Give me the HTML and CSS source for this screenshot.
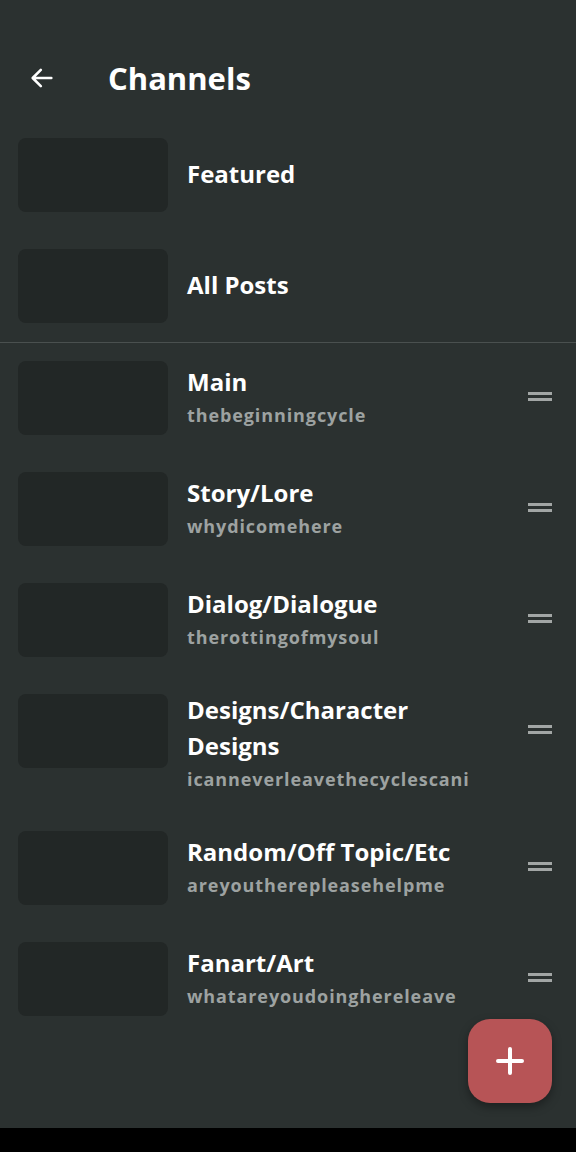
FILE: index.html
```html
<!DOCTYPE html>
<html lang="en">
<head>
    <meta charset="UTF-8">
    <meta name="viewport" content="width=device-width, initial-scale=1.0">
    <title>Channels</title>
    <link rel="stylesheet" href="styles.css">
</head>
<body>
    <div class="screen">
        <div class="header">
            <span class="back">
                <svg width="28" height="28" viewBox="0 0 24 24">
                    <path d="M20 12H4.5M11 5l-7 7 7 7" fill="none" stroke="#fff" stroke-width="2.2" stroke-linecap="round" stroke-linejoin="round"/>
                </svg>
            </span>
            <h1>Channels</h1>
        </div>

        <ul class="channels fixed">
            <li><div class="thumb"></div><div class="info"><span class="name">Featured</span></div></li>
            <li><div class="thumb"></div><div class="info"><span class="name">All Posts</span></div></li>
        </ul>

        <div class="divider"></div>

        <ul class="channels">
            <li>
                <div class="thumb"></div>
                <div class="info"><span class="name">Main</span><span class="sub">thebeginningcycle</span></div>
                <div class="handle"><i></i><i></i></div>
            </li>
            <li>
                <div class="thumb"></div>
                <div class="info"><span class="name">Story/Lore</span><span class="sub">whydicomehere</span></div>
                <div class="handle"><i></i><i></i></div>
            </li>
            <li>
                <div class="thumb"></div>
                <div class="info"><span class="name">Dialog/Dialogue</span><span class="sub">therottingofmysoul</span></div>
                <div class="handle"><i></i><i></i></div>
            </li>
            <li>
                <div class="thumb"></div>
                <div class="info"><span class="name">Designs/Character Designs</span><span class="sub">icanneverleavethecyclescani</span></div>
                <div class="handle"><i></i><i></i></div>
            </li>
            <li>
                <div class="thumb"></div>
                <div class="info"><span class="name">Random/Off Topic/Etc</span><span class="sub">areyoutherepleasehelpme</span></div>
                <div class="handle"><i></i><i></i></div>
            </li>
            <li>
                <div class="thumb"></div>
                <div class="info"><span class="name">Fanart/Art</span><span class="sub">whatareyoudoinghereleave</span></div>
                <div class="handle"><i></i><i></i></div>
            </li>
        </ul>

        <button class="fab">
            <svg width="30" height="30" viewBox="0 0 30 30">
                <path d="M15 3v24M3 15h24" stroke="#fff" stroke-width="4" stroke-linecap="round"/>
            </svg>
        </button>
    </div>
    <div class="navbar"></div>
</body>
</html>
```

FILE: styles.css
```css
body, html {
    margin: 0;
    padding: 0;
    height: 100%;
    overflow: hidden;
    font-family: "Open Sans", Lato, sans-serif;
}

body {
    background: #000;
    color: #fff;
}

.screen {
    position: relative;
    height: 1128px;
    background: #2b3130;
}

.header {
    display: flex;
    align-items: center;
    height: 83.5px;
    padding: 36px 0 0 28px;
}

    .header .back {
        display: flex;
        width: 80px;
    }

    .header h1 {
        margin: 0;
        font-size: 31px;
        font-weight: 700;
    }

ul {
    list-style-type: none;
    padding: 0;
    margin: 0;
}

.channels li {
    display: flex;
    align-items: flex-start;
    padding: 18.5px 24px 18.5px 18px;
}

.thumb {
    flex: none;
    width: 150px;
    height: 74px;
    border-radius: 8px;
    background: #222726;
}

.info {
    flex: 1;
    min-height: 74px;
    display: flex;
    flex-direction: column;
    justify-content: center;
    padding: 0 40px 0 19px;
}

    .info .name {
        font-size: 24px;
        font-weight: 700;
        line-height: 36px;
        margin-top: -2px;
    }

    .info .sub {
        font-size: 18px;
        font-weight: 700;
        line-height: 30px;
        color: #9da2a1;
        letter-spacing: 0.9px;
    }

.handle {
    flex: none;
    display: flex;
    flex-direction: column;
    gap: 3px;
    margin-top: 31px;
}

    .handle i {
        display: block;
        width: 24px;
        height: 3px;
        background: #a2a6a5;
    }

.divider {
    height: 1px;
    background: #4a504f;
}

.fab {
    position: absolute;
    right: 24px;
    bottom: 25px;
    width: 84px;
    height: 84px;
    border: none;
    border-radius: 22px;
    background: #b75456;
    display: flex;
    align-items: center;
    justify-content: center;
    box-shadow: 0 4px 10px rgba(0, 0, 0, 0.35);
}

.navbar {
    height: 24px;
    background: #000;
}
```
